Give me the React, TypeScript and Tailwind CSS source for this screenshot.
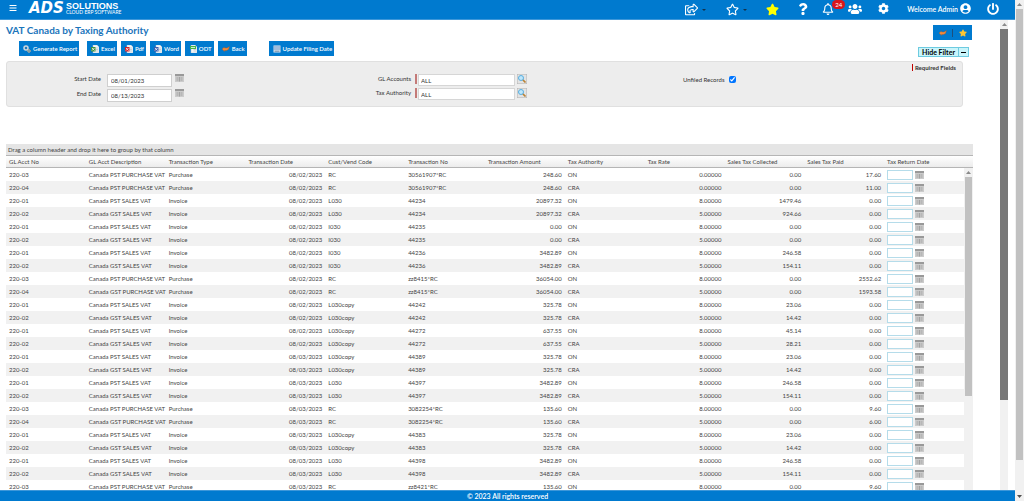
import type { ReactNode } from "react";
import {
    FaBars,
    FaCog,
    FaPowerOff,
    FaQuestion,
    FaRegBell,
    FaRegShareSquare,
    FaRegStar,
    FaStar,
    FaUserCircle,
    FaUsers,
} from "react-icons/fa";

type Row = {
    acct: string;
    desc: string;
    type: string;
    date: string;
    code: string;
    no: string;
    amount: string;
    authority: string;
    rate: string;
    collected: string;
    paid: string;
};

const COLUMNS = [
    "GL Acct No",
    "GL Acct Description",
    "Transaction Type",
    "Transaction Date",
    "Cust/Vend Code",
    "Transaction No",
    "Transaction Amount",
    "Tax Authority",
    "Tax Rate",
    "Sales Tax Collected",
    "Sales Tax Paid",
    "Tax Return Date",
];

const sale = (gst: boolean, date: string, code: string, no: string, amount: string, collected: string): Row => ({
    acct: gst ? "220-02" : "220-01",
    desc: gst ? "Canada GST SALES VAT" : "Canada PST SALES VAT",
    type: "Invoice",
    date,
    code,
    no,
    amount,
    authority: gst ? "CRA" : "ON",
    rate: gst ? "5.00000" : "8.00000",
    collected,
    paid: "0.00",
});

const purchase = (acct: string, tax: string, date: string, no: string, amount: string, rate: string, paid: string): Row => ({
    acct,
    desc: `Canada ${tax} PURCHASE VAT`,
    type: "Purchase",
    date,
    code: "RC",
    no,
    amount,
    authority: acct === "220-03" ? "ON" : "CRA",
    rate,
    collected: "0.00",
    paid,
});

const ROWS: Row[] = [
    purchase("220-03", "PST", "08/02/2023", "30561907*RC", "248.60", "0.00000", "17.60"),
    purchase("220-04", "PST", "08/02/2023", "30561907*RC", "248.60", "0.00000", "11.00"),
    sale(false, "08/02/2023", "L030", "44234", "20897.32", "1479.46"),
    sale(true, "08/02/2023", "L030", "44234", "20897.32", "924.66"),
    sale(false, "08/02/2023", "I030", "44235", "0.00", "0.00"),
    sale(true, "08/02/2023", "I030", "44235", "0.00", "0.00"),
    sale(false, "08/02/2023", "I030", "44236", "3482.89", "246.58"),
    sale(true, "08/02/2023", "I030", "44236", "3482.89", "154.11"),
    purchase("220-03", "PST", "08/02/2023", "zz8415*RC", "36054.00", "8.00000", "2552.62"),
    purchase("220-04", "GST", "08/02/2023", "zz8415*RC", "36054.00", "5.00000", "1593.58"),
    sale(false, "08/02/2023", "L030copy", "44242", "325.78", "23.06"),
    sale(true, "08/02/2023", "L030copy", "44242", "325.78", "14.42"),
    sale(false, "08/02/2023", "L030copy", "44272", "637.55", "45.14"),
    sale(true, "08/02/2023", "L030copy", "44272", "637.55", "28.21"),
    sale(false, "08/03/2023", "L030copy", "44389", "325.78", "23.06"),
    sale(true, "08/03/2023", "L030copy", "44389", "325.78", "14.42"),
    sale(false, "08/03/2023", "L030", "44397", "3482.89", "246.58"),
    sale(true, "08/03/2023", "L030", "44397", "3482.89", "154.11"),
    purchase("220-03", "PST", "08/03/2023", "3082254*RC", "135.60", "8.00000", "9.60"),
    purchase("220-04", "GST", "08/03/2023", "3082254*RC", "135.60", "5.00000", "6.00"),
    sale(false, "08/03/2023", "L030copy", "44383", "325.78", "23.06"),
    sale(true, "08/03/2023", "L030copy", "44383", "325.78", "14.42"),
    sale(false, "08/03/2023", "L030", "44398", "3482.89", "246.58"),
    sale(true, "08/03/2023", "L030", "44398", "3482.89", "154.11"),
    purchase("220-03", "PST", "08/03/2023", "zz8421*RC", "135.60", "8.00000", "9.60"),
];

const GearsIcon = () => (
    <svg viewBox="0 0 16 16" className="size-2">
        <circle cx="6" cy="6" r="4" fill="none" stroke="#cfd6dc" strokeWidth="3" />
        <circle cx="6" cy="6" r="1.5" fill="#5a7d99" />
        <circle cx="12" cy="12" r="2.5" fill="none" stroke="#d9b88a" strokeWidth="2" />
    </svg>
);

const DocIcon = ({ tint, front = false }: { tint: string; front?: boolean }) => (
    <svg viewBox="0 0 16 16" className="size-2">
        <path d="M4 0h8l4 4v12H4z" fill="#f4f6f8" stroke="#b9c2cc" />
        <path d="M9 6h5M9 9h5M9 12h5" stroke="#9aa7b5" />
        <rect x={front ? 2 : 0} y={front ? 2 : 4} width={front ? 12 : 9} height={front ? 6 : 9} fill={tint} />
        <path d={front ? "M4 5h8" : "M2 6l5 5M7 6l-5 5"} stroke="#fff" strokeWidth="1.5" />
    </svg>
);

const BackIcon = () => (
    <svg viewBox="0 0 16 16" className="size-2">
        <path d="M0 8l5-4v2h5l5-3-2 6-4 2H5v2z" fill="#f08a3c" stroke="#a8501c" strokeWidth="0.7" />
    </svg>
);

const SaveIcon = () => (
    <svg viewBox="0 0 16 16" className="size-2">
        <rect x="1" y="1" width="14" height="14" fill="#dfe8f2" />
        <path d="M1 4h14M1 8h14" stroke="#5f8fc4" strokeWidth="2" />
        <rect x="3" y="11" width="10" height="3" fill="#8ca5bd" />
    </svg>
);

const CalendarIcon = () => (
    <svg viewBox="0 0 18 16" className="block h-2 w-[9px] shrink-0">
        <rect width="18" height="16" fill="#cbcbcb" />
        <path d="M0 2h18" stroke="#999" strokeWidth="4" />
        <path d="M3 8h4M3 12h4M11 8h4M11 12h4M9 6v9" stroke="#a3a3a3" strokeWidth="2" />
    </svg>
);

const LookupIcon = () => (
    <svg viewBox="0 0 20 20" className="block size-[10px]">
        <rect x="0.5" y="0.5" width="19" height="19" fill="#e3e3e3" stroke="#b0b0b0" />
        <path d="M11 11l6 6" stroke="#b98235" strokeWidth="3.5" />
        <circle cx="8" cy="8" r="5" fill="#bfe7fb" stroke="#58aee0" strokeWidth="2" />
    </svg>
);

const Arrow = ({ down = false }: { down?: boolean }) => (
    <svg viewBox="0 0 9 9" className="size-[9px] shrink-0">
        <path d={down ? "M2 3h5L4.5 6z" : "M2 6h5L4.5 3z"} fill={down ? "#505050" : "#8a8a8a"} />
    </svg>
);

const Caret = () => <span className="border-x-2 border-t-2 border-x-transparent border-t-[#12324d]" />;

const ToolButton = ({ icon, children }: { icon: ReactNode; children: ReactNode }) => (
    <button className="flex h-[15px] items-center gap-[2px] bg-[#007acf] pr-[2px] pl-1 text-[6px] font-semibold whitespace-nowrap text-white">
        {icon}
        {children}
    </button>
);

const DateField = ({ id, label, value }: { id: string; label: string; value: string }) => (
    <div className="flex h-[15px] items-start">
        <label htmlFor={id} className="w-[100px] pr-[6px] text-right leading-[10px]">{label}</label>
        <input id={id} defaultValue={value} className="h-[13px] w-[65px] border border-[#cfcfcf] bg-white px-[3px] text-[6px]" />
        <button aria-label={`${label} calendar`} className="ml-[3px]"><CalendarIcon /></button>
    </div>
);

const LookupField = ({ id, label }: { id: string; label: string }) => (
    <div className="flex h-[14px] items-start">
        <label htmlFor={id} className="w-[60px] pr-1 text-right leading-[10px]">{label}</label>
        <span className="mr-[1px] h-[10px] w-[2px] bg-[#c47a78]" />
        <input id={id} defaultValue="ALL" className="h-3 w-[97px] border border-[#d6d6d6] bg-white px-[2px] text-[6px]" />
        <button aria-label={`${label} lookup`} className="ml-[2px]"><LookupIcon /></button>
    </div>
);

const Header = () => (
    <header className="flex h-5 shrink-0 items-center border-b border-[#3d97d9] bg-[#007acf] pr-4 pl-[9px] text-white">
        <div className="flex items-center gap-3 pb-1">
            <button aria-label="Menu"><FaBars className="size-2" /></button>
            <div className="flex items-center gap-[2px]">
                <span className="font-['DejaVu_Sans'] text-[15px] leading-4 font-bold italic">ADS</span>
                <span className="flex flex-col">
                    <span className="font-['Liberation_Sans'] text-[9px] leading-[8px] font-bold">SOLUTIONS</span>
                    <span className="text-[5px] leading-[4px]">CLOUD ERP SOFTWARE</span>
                </span>
            </div>
        </div>
        <div className="ml-auto flex items-center">
            <button aria-label="Share" className="flex w-[41px] items-center gap-1"><FaRegShareSquare className="size-[13px]" /><Caret /></button>
            <button aria-label="Favorites" className="flex w-10 items-center gap-1"><FaRegStar className="size-[13px]" /><Caret /></button>
            <button aria-label="Add favorite" className="w-[31px]"><FaStar className="size-[13px] text-[#ffff00]" /></button>
            <button aria-label="Help" className="w-[25px] pb-[2px]"><FaQuestion className="size-3" /></button>
            <button aria-label="Notifications" className="relative w-[26px] pb-[2px]">
                <FaRegBell className="size-3" />
                <span className="absolute -top-[3px] left-[10px] rounded-full bg-[#d9161c] px-[3px] text-[6px] leading-[9px]">24</span>
            </button>
            <button aria-label="Users" className="w-[30px] pb-[2px]"><FaUsers className="size-[14px]" /></button>
            <button aria-label="Settings" className="w-[29px] pb-[2px]"><FaCog className="size-[11px]" /></button>
            <span className="mr-[2px] text-[7px] font-semibold whitespace-nowrap">Welcome Admin</span>
            <button aria-label="Account" className="w-[27px] pb-[2px]"><FaUserCircle className="size-[11px]" /></button>
            <button aria-label="Log out" className="pb-[2px]"><FaPowerOff className="size-3" /></button>
        </div>
    </header>
);

const Filters = () => (
    <section className="mr-[10px] grid h-[46px] grid-cols-[348px_316px_1fr] rounded-[3px] border border-[#e0e0e0] bg-[#ededed] text-[6px] text-[#333]">
        <div className="pt-3">
            <DateField id="start" label="Start Date" value="08/01/2023" />
            <DateField id="end" label="End Date" value="08/13/2023" />
        </div>
        <div className="pt-3">
            <LookupField id="gl" label="GL Accounts" />
            <LookupField id="tax" label="Tax Authority" />
        </div>
        <div className="flex items-start justify-between pr-[6px] pl-3">
            <label className="mt-[13px] flex items-center gap-1 whitespace-nowrap">
                Unfiled Records
                <input type="checkbox" defaultChecked className="size-[7px]" />
            </label>
            <span className="mt-[2px] border-l border-[#c00000] pl-[2px] leading-[7px] font-bold">Required Fields</span>
        </div>
    </section>
);

const Grid = () => (
    <section className="mt-[37px] flex min-h-0 flex-1 flex-col text-[6px] text-[#444]">
        <div className="h-[11px] shrink-0 bg-[#e5e5e5] px-[2px] leading-[11px]">
            Drag a column header and drop it here to group by that column
        </div>
        <div className="relative min-h-0 flex-1 overflow-hidden">
            <div className="h-[13px] border-y border-[#b5b5b5] bg-linear-to-b from-white to-[#ececec]" />
            <table className="relative -mt-[13px] w-[calc(100%-9px)] table-fixed border-collapse">
                <thead>
                    <tr className="h-[13px]">
                        {COLUMNS.map((name) => (
                            <th key={name} className="p-0 pl-[3px] text-left font-normal whitespace-nowrap">{name}</th>
                        ))}
                    </tr>
                </thead>
                <tbody>
                    {ROWS.map((row, i) => (
                        <tr key={i} className="h-[13px] leading-[11px] whitespace-nowrap even:bg-[#f1f1f1]">
                            <td className="p-0 pl-[3px]">{row.acct}</td>
                            <td className="p-0 pl-[3px]">{row.desc}</td>
                            <td className="p-0 pl-[3px]">{row.type}</td>
                            <td className="p-0 pr-[3px] text-right">{row.date}</td>
                            <td className="p-0 pl-[3px]">{row.code}</td>
                            <td className="p-0 pl-[3px]">{row.no}</td>
                            <td className="p-0 pr-[3px] text-right">{row.amount}</td>
                            <td className="p-0 pl-[3px]">{row.authority}</td>
                            <td className="p-0 pr-[3px] text-right">{row.rate}</td>
                            <td className="p-0 pr-[3px] text-right">{row.collected}</td>
                            <td className="p-0 pr-[3px] text-right">{row.paid}</td>
                            <td className="p-0 pl-[3px]">
                                <div className="flex items-center gap-[2px]">
                                    <input aria-label={`Tax return date ${i + 1}`} className="h-[10px] w-[26px] border border-[#b5dcea] bg-white" />
                                    <button aria-label="Pick date"><CalendarIcon /></button>
                                </div>
                            </td>
                        </tr>
                    ))}
                </tbody>
            </table>
            <div className="absolute top-[13px] right-0 bottom-0 flex w-[9px] flex-col bg-[#f1f1f1]">
                <Arrow />
                <div className="mx-[1px] h-[68%] bg-[#c1c1c1]" />
            </div>
        </div>
    </section>
);

export default function App() {
    return (
        <div className="flex h-screen overflow-hidden bg-white font-['Lato','Open_Sans',sans-serif]">
            <div className="flex min-w-0 flex-1 flex-col">
                <Header />
                <div className="flex min-h-0 flex-1 pr-[7px]">
                    <main className="mr-[27px] flex min-w-0 flex-1 flex-col pl-[6px]">
                        <div className="flex h-[41px] shrink-0 justify-between">
                            <div>
                                <h1 className="h-[21px] text-[10px] leading-[21px] font-bold text-[#1b75bb]">VAT Canada by Taxing Authority</h1>
                                <div className="flex gap-1 pl-[13px]">
                                    <ToolButton icon={<GearsIcon />}>Generate Report</ToolButton>
                                    <span className="w-0" />
                                    <ToolButton icon={<DocIcon tint="#3f9142" />}>Excel</ToolButton>
                                    <ToolButton icon={<DocIcon tint="#d3222a" />}>Pdf</ToolButton>
                                    <ToolButton icon={<DocIcon tint="#3b5fb0" />}>Word</ToolButton>
                                    <ToolButton icon={<DocIcon tint="#41b54a" front />}>ODT</ToolButton>
                                    <ToolButton icon={<BackIcon />}>Back</ToolButton>
                                    <span className="w-[14px]" />
                                    <ToolButton icon={<SaveIcon />}>Update Filing Date</ToolButton>
                                </div>
                            </div>
                            <div className="flex flex-col items-end pt-[5px]">
                                <div className="mr-px flex h-[15px] w-[39px] items-center justify-evenly bg-[#007acf]">
                                    <button aria-label="Go back"><BackIcon /></button>
                                    <span className="h-2 w-px bg-[#1d4f7c]" />
                                    <button aria-label="Bookmark"><FaStar className="size-2 text-[#fbc531]" /></button>
                                </div>
                                <button className="mt-[7px] mr-1 flex h-[10px] items-center border border-[#6ecbe0] bg-[#c9f5fb] text-[7px] font-bold text-black">
                                    <span className="px-[3px] leading-[8px]">Hide Filter</span>
                                    <span className="flex h-full w-[10px] items-center justify-center border-l border-[#6ecbe0]"><span className="h-px w-[5px] bg-black" /></span>
                                </button>
                            </div>
                        </div>
                        <Filters />
                        <Grid />
                    </main>
                    <div className="flex w-2 flex-col bg-[#f1f1f1]">
                        <Arrow />
                        <div className="h-[79%] bg-[#787878]" />
                    </div>
                </div>
                <footer className="h-[11px] shrink-0 border-t border-[#3d97d9] bg-[#007acf] text-center text-[7px] leading-[10px] font-semibold text-white">
                    © 2023 All rights reserved
                </footer>
            </div>
            <div className="flex w-[9px] flex-col justify-between bg-[#f1f1f1]">
                <Arrow />
                <div className="mx-px mb-auto h-[90%] bg-[#c1c1c1]" />
                <Arrow down />
            </div>
        </div>
    );
}
